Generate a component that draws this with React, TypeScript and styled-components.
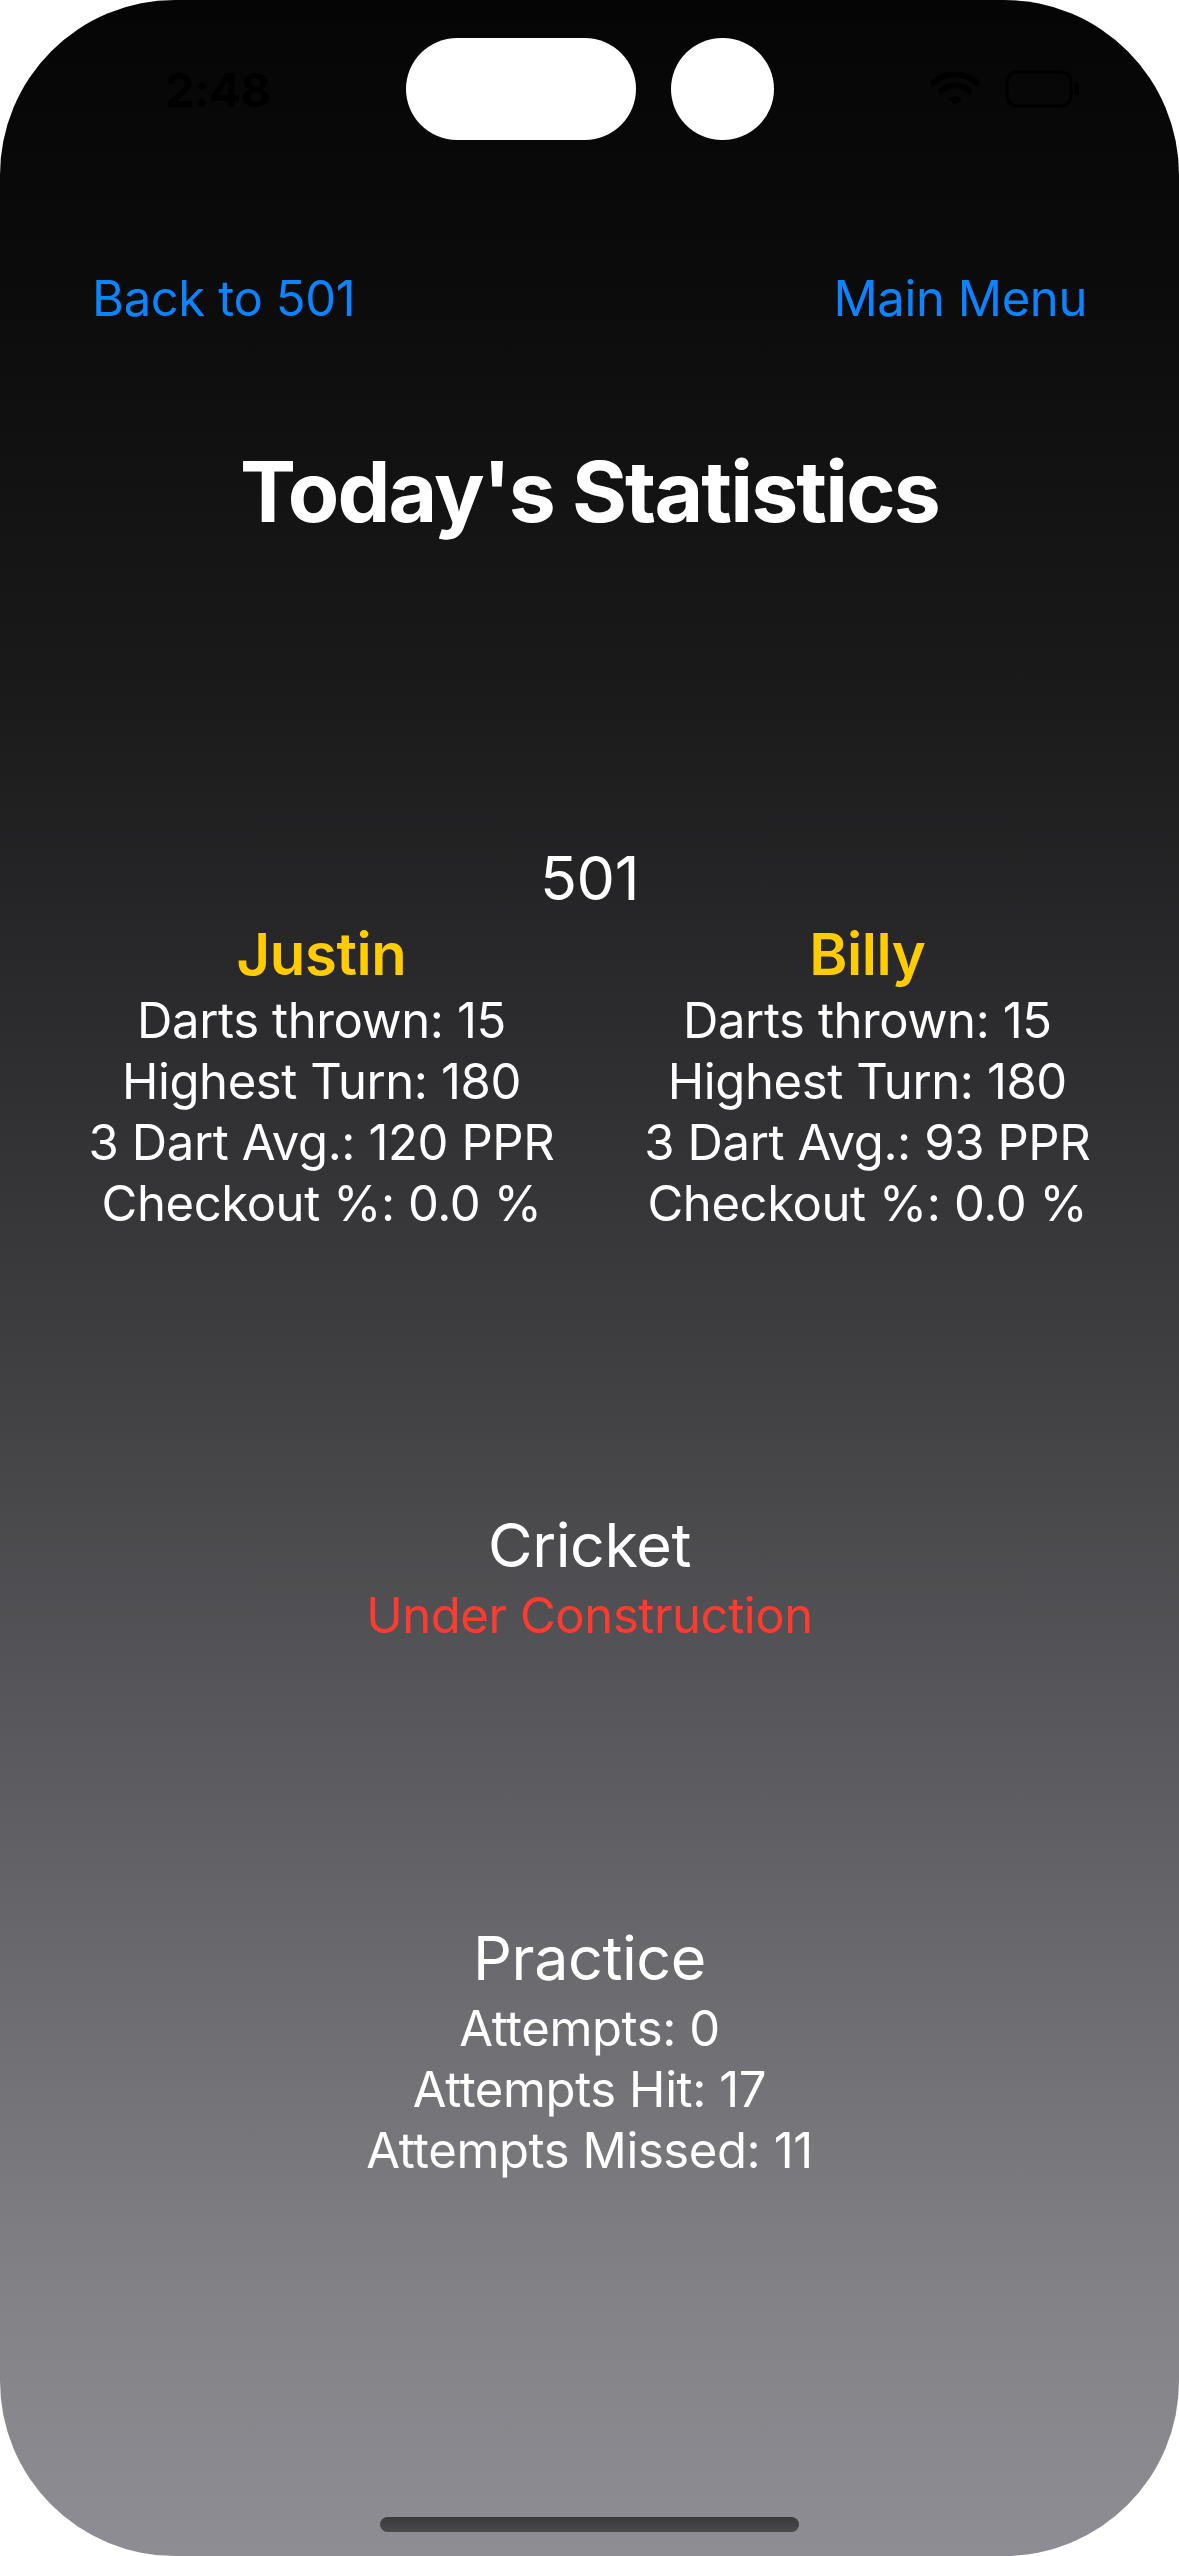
import {FC} from 'react';
import styled, {createGlobalStyle} from 'styled-components';

const GlobalStyle = createGlobalStyle`
  html, body {
    margin: 0;
    padding: 0;
    background: #ffffff;
  }
  body {
    font-family: Inter, "Noto Sans", "Liberation Sans", sans-serif;
    letter-spacing: -0.4px;
    -webkit-font-smoothing: antialiased;
  }
`;

const Screen = styled.div`
  width: 1179px;
  height: 2556px;
  border-radius: 175px;
  overflow: hidden;
  display: flex;
  flex-direction: column;
  align-items: stretch;
  color: #ffffff;
  background: linear-gradient(
    180deg,
    #050505 0%,
    #0c0c0c 12%,
    #1a1a1b 27%,
    #2c2c2e 40%,
    #404043 54%,
    #5d5d61 70%,
    #838287 90%,
    #8e8d93 100%
  );
`;

const StatusBar = styled.div`
  display: grid;
  grid-template-columns: 1fr auto 1fr;
  align-items: center;
  padding-top: 38px;
  height: 102px;
`;

const Clock = styled.div`
  justify-self: center;
  margin-left: 30px;
  font-size: 47px;
  font-weight: 700;
  color: #000000;
`;

const Island = styled.div`
  display: flex;
  gap: 35px;
`;

const IslandPart = styled.div<{$w: number}>`
  width: ${(p) => p.$w}px;
  height: 102px;
  border-radius: 51px;
  background: #ffffff;
`;

const StatusIcons = styled.div`
  display: flex;
  align-items: center;
  gap: 26px;
  justify-self: start;
  margin-left: 157px;
`;

const NavRow = styled.div`
  display: flex;
  justify-content: space-between;
  padding: 0 92px;
  margin-top: 128px;
`;

const NavLink = styled.a`
  font-size: 49px;
  line-height: 61px;
  color: #0a84ff;
  text-decoration: none;
`;

const Title = styled.h1`
  margin: 113px 0 0;
  text-align: center;
  font-size: 84px;
  line-height: 100px;
  font-weight: 700;
  letter-spacing: -0.022em;
`;

const Section = styled.section<{$top: number}>`
  margin-top: ${(p) => p.$top}px;
  display: flex;
  flex-direction: column;
  align-items: center;
  text-align: center;
`;

const SectionTitle = styled.div`
  font-size: 61px;
  line-height: 80px;
`;

const PlayerRow = styled.div`
  display: flex;
  justify-content: center;
  gap: 90px;
`;

const PlayerColumn = styled.div`
  display: flex;
  flex-direction: column;
  align-items: center;
`;

const PlayerName = styled.div`
  font-size: 58px;
  line-height: 72px;
  font-weight: 600;
  color: #ffcc00;
`;

const StatLine = styled.div<{$color?: string}>`
  font-size: 49px;
  line-height: 61px;
  color: ${(p) => p.$color || '#ffffff'};
  white-space: nowrap;
`;

const HomeIndicator = styled.div`
  margin: auto auto 24px;
  width: 419px;
  height: 15px;
  border-radius: 8px;
  background: linear-gradient(180deg, #3a3a3c, #4a4a4d);
`;

const WifiIcon: FC = () => (
  <svg width='48' height='34' viewBox='0 0 48 34'>
    <path d='M2 11 A32 32 0 0 1 46 11' stroke='#000' strokeWidth='6' fill='none' strokeLinecap='round' />
    <path d='M10 19 A20 20 0 0 1 38 19' stroke='#000' strokeWidth='6' fill='none' strokeLinecap='round' />
    <path d='M17 27 L24 33 L31 27 A10 10 0 0 0 17 27 Z' fill='#000' />
  </svg>
);

const BatteryIcon: FC = () => (
  <svg width='76' height='38' viewBox='0 0 76 38'>
    <rect x='2' y='2' width='64' height='34' rx='10' stroke='#000' strokeWidth='3' fill='none' />
    <rect x='69' y='13' width='5' height='12' rx='2.5' fill='#000' />
  </svg>
);

type Player = {
  name: string;
  darts: number;
  highest: number;
  avg: number;
  checkout: string;
};

const players: Player[] = [
  {name: 'Justin', darts: 15, highest: 180, avg: 120, checkout: '0.0'},
  {name: 'Billy', darts: 15, highest: 180, avg: 93, checkout: '0.0'},
];

const App: FC = () => {
  return (
    <>
      <GlobalStyle />
      <Screen>
        <StatusBar>
          <Clock>2:48</Clock>
          <Island>
            <IslandPart $w={230} />
            <IslandPart $w={103} />
          </Island>
          <StatusIcons>
            <WifiIcon />
            <BatteryIcon />
          </StatusIcons>
        </StatusBar>

        <NavRow>
          <NavLink>Back to 501</NavLink>
          <NavLink>Main Menu</NavLink>
        </NavRow>

        <Title>Today's Statistics</Title>

        <Section $top={296}>
          <SectionTitle>501</SectionTitle>
          <PlayerRow>
            {players.map((p) => (
              <PlayerColumn key={p.name}>
                <PlayerName>{p.name}</PlayerName>
                <StatLine>Darts thrown: {p.darts}</StatLine>
                <StatLine>Highest Turn: {p.highest}</StatLine>
                <StatLine>3 Dart Avg.: {p.avg} PPR</StatLine>
                <StatLine>Checkout %: {p.checkout} %</StatLine>
              </PlayerColumn>
            ))}
          </PlayerRow>
        </Section>

        <Section $top={271}>
          <SectionTitle>Cricket</SectionTitle>
          <StatLine $color='#ff3b30'>Under Construction</StatLine>
        </Section>

        <Section $top={272}>
          <SectionTitle>Practice</SectionTitle>
          <StatLine>Attempts: 0</StatLine>
          <StatLine>Attempts Hit: 17</StatLine>
          <StatLine>Attempts Missed: 11</StatLine>
        </Section>

        <HomeIndicator />
      </Screen>
    </>
  );
};

export default App;
